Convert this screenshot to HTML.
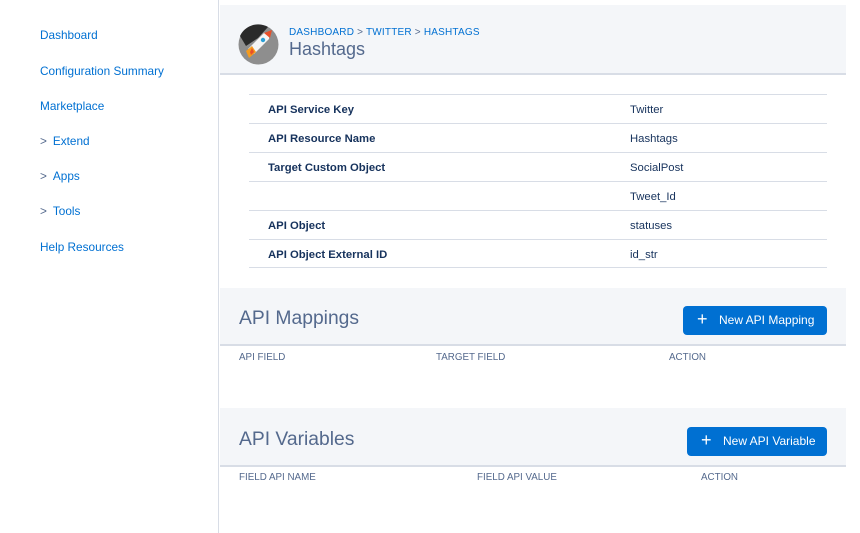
<!DOCTYPE html>
<html><head><style>
*{margin:0;padding:0;box-sizing:border-box}
body{width:860px;height:533px;background:#fff;font-family:"Liberation Sans",sans-serif;position:relative;overflow:hidden;color:#16325c}
.side{position:absolute;left:0;top:0;width:219px;height:533px;border-right:1px solid #d8dde6}
.side div{position:absolute;left:40px;font-size:11.8px;color:#0070d2}
.side span{display:inline-block;margin-right:6px;color:#54698d}
.band{position:absolute;left:220px;width:626px;background:#f4f6f9;border-bottom:2px solid #d8dde6}
.row{position:absolute;left:249px;width:578px;height:29px;border-top:1px solid #d8dde6;font-size:11.3px}
.row b{position:absolute;left:19px;top:9px;font-weight:bold;color:#16325c}
.row i{position:absolute;left:381px;top:9px;font-style:normal;color:#16325c}
.h2{position:absolute;left:239px;font-size:19.3px;color:#54698d;font-weight:300}
.btn{position:absolute;background:#0070d2;color:#fff;border-radius:4px;font-size:12px;height:29px;line-height:29px;padding-left:36px}
.btn:before{content:"+";position:absolute;left:14px;top:-1px;font-size:18px}
.th{position:absolute;font-size:9.8px;color:#54698d}
</style></head><body>
<div class="side">
<div style="top:28px">Dashboard</div>
<div style="top:64px">Configuration Summary</div>
<div style="top:99px">Marketplace</div>
<div style="top:134px"><span>&gt;</span>Extend</div>
<div style="top:169px"><span>&gt;</span>Apps</div>
<div style="top:204px"><span>&gt;</span>Tools</div>
<div style="top:240px">Help Resources</div>
</div>
<div class="band" style="top:5px;height:70px"></div>
<svg style="position:absolute;left:238px;top:24px" width="41" height="41" viewBox="0 0 41 41">
<circle cx="20.5" cy="20.5" r="20" fill="#8e8e8e"/>
<path d="M2 12 A20 20 0 0 1 30 3 L20 14 L8 22z" fill="#2a2a2a"/>
<path d="M10 25 L26 9 L32 9 L31 15 L16 30z" fill="#f4f4f4"/>
<path d="M26 9 L34 6 L32 14z" fill="#e8502a"/>
<circle cx="25" cy="16" r="2.2" fill="#2a9fd6"/>
<path d="M8 27 L14 22 L18 28 L11 34z" fill="#f49b1e"/>
<path d="M12 28 L14 24 L16 28 L13 31z" fill="#e8502a"/>
</svg>
<div style="position:absolute;left:289px;top:27px;font-size:10px;color:#0070d2;letter-spacing:.2px">DASHBOARD <span style="color:#54698d">&gt;</span> TWITTER <span style="color:#54698d">&gt;</span> HASHTAGS</div>
<div style="position:absolute;left:289px;top:39px;font-size:18px;color:#54698d">Hashtags</div>
<div class="row" style="top:94px"><b>API Service Key</b><i>Twitter</i></div>
<div class="row" style="top:123px"><b>API Resource Name</b><i>Hashtags</i></div>
<div class="row" style="top:152px"><b>Target Custom Object</b><i>SocialPost</i></div>
<div class="row" style="top:181px"><i>Tweet_Id</i></div>
<div class="row" style="top:210px"><b>API Object</b><i>statuses</i></div>
<div class="row" style="top:239px;border-bottom:1px solid #d8dde6"><b>API Object External ID</b><i>id_str</i></div>
<div class="band" style="top:288px;height:58px"></div>
<div class="h2" style="top:308px">API Mappings</div>
<div class="btn" style="left:683px;top:306px;width:144px">New API Mapping</div>
<div class="th" style="left:239px;top:352px">API FIELD</div>
<div class="th" style="left:436px;top:352px">TARGET FIELD</div>
<div class="th" style="left:669px;top:352px">ACTION</div>
<div class="band" style="top:408px;height:59px"></div>
<div class="h2" style="top:429px">API Variables</div>
<div class="btn" style="left:687px;top:427px;width:140px">New API Variable</div>
<div class="th" style="left:239px;top:472px">FIELD API NAME</div>
<div class="th" style="left:477px;top:472px">FIELD API VALUE</div>
<div class="th" style="left:701px;top:472px">ACTION</div>
</body></html>
